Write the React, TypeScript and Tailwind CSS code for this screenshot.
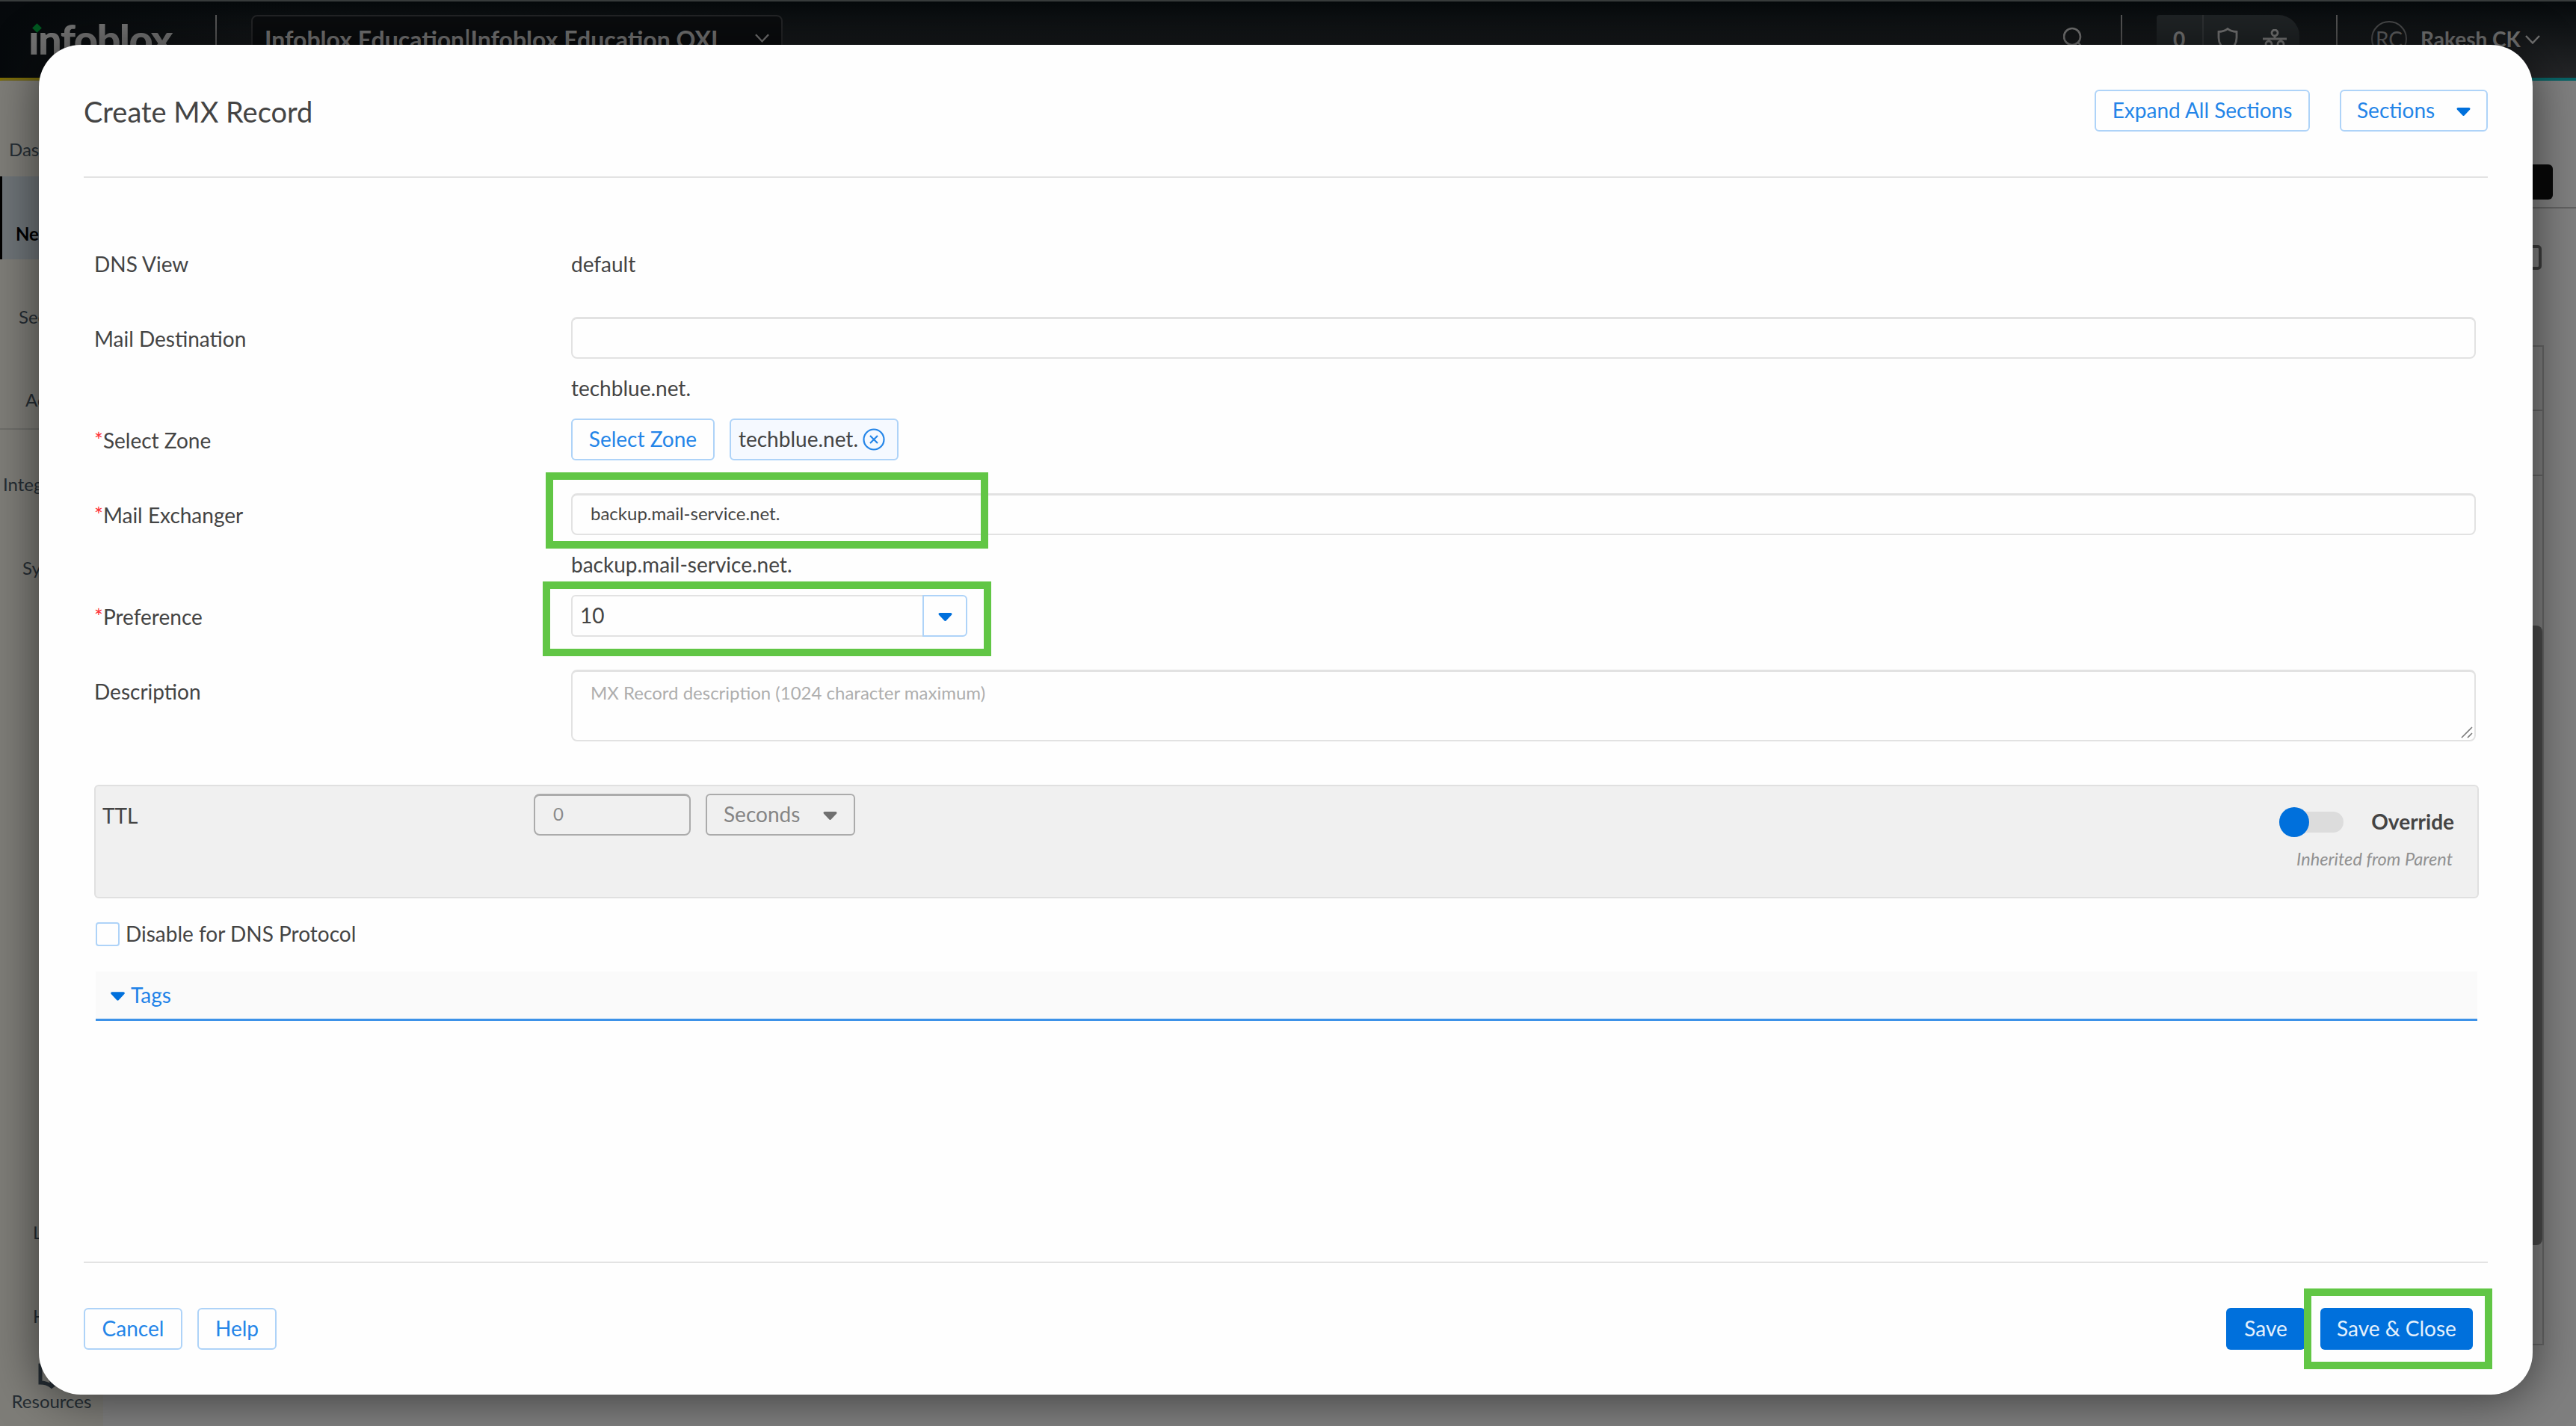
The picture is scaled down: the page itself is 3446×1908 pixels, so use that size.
import type { ReactNode } from 'react'

interface FieldRowProps {
  label: string
  required?: boolean
  className: string
  labelClassName?: string
  children: ReactNode
}

const navItems = [
  { label: 'Dashboard', className: 'h-[86px] pl-3 pt-[34px]' },
  {
    label: 'Network',
    className:
      'h-[111px] border-l-[3px] border-black bg-[#dce8f0] pl-[18px] pt-[61px] font-bold text-black',
  },
  { label: 'Security', className: 'h-[112px] pl-[25px] pt-[61px]' },
  {
    label: 'Admin',
    className: 'h-[116px] border-b-2 border-[#dddcd4] pl-[34px] pt-[60px]',
  },
  { label: 'Integrations', className: 'h-[108px] pl-[4px] pt-[57px]' },
  { label: 'System', className: 'h-[889px] pl-[30px] pt-[61px]' },
  { label: 'Launch', className: 'h-[112px] pl-[44px] pt-[61px]' },
  { label: 'Help', className: 'h-[111px] pl-[44px] pt-[61px]' },
]

function Caret({ className }: { className: string }) {
  return (
    <svg viewBox="0 0 20 12" className={className} fill="currentColor">
      <path d="M2 0h16c1.6 0 2.4 1.7 1.3 2.9l-7.8 8.3a2 2 0 0 1-3 0L.7 2.9C-.4 1.700.4 0 2 0z" />
    </svg>
  )
}

function Chevron({ className }: { className: string }) {
  return (
    <svg
      viewBox="0 0 20 12"
      className={className}
      fill="none"
      stroke="currentColor"
      strokeWidth="2.4"
    >
      <path d="M1 1l9 9.500 9-9.500" />
    </svg>
  )
}

function FieldRow({
  label,
  required,
  className,
  labelClassName = 'mt-[9px]',
  children,
}: FieldRowProps) {
  return (
    <div className={`flex items-start ${className}`}>
      <div className={`-ml-[2px] w-[638px] shrink-0 ${labelClassName}`}>
        {required && <span className="text-[#ff2f36]">*</span>}
        {label}
      </div>
      <div className="flex-1">{children}</div>
    </div>
  )
}

function TopBar() {
  return (
    <header className="flex h-[104px] items-start border-t-2 border-[#707878] bg-[linear-gradient(to_right,#0c1318,transparent_400px),linear-gradient(to_bottom,#0c1418,#4a4c50)] text-[#e4e4e4]">
      <div className="relative mt-[21px] ml-[38px] w-[250px] text-[56px] leading-[58px] font-black tracking-[-1.6px] text-[#e8e8e8]">
        ınfoblox
        <span className="absolute top-[10px] left-[7px] size-[9px] rotate-45 bg-[#00b140]" />
      </div>
      <div className="mt-[18px] h-14 w-[2px] bg-[#b0b0b0]" />
      <div className="mt-[18px] ml-[46px] flex h-16 w-[711px] items-start justify-between rounded-lg border-2 border-[#46494c] bg-[#14181c] pt-[11px] pr-4 pl-4 text-[32px] leading-10 font-bold">
        <span className="w-[630px] overflow-hidden whitespace-nowrap">
          Infoblox Education|Infoblox Education OXL
        </span>
        <Chevron className="mt-[12px] h-[12px] w-[19px]" />
      </div>
      <div className="flex-1" />
      <svg
        viewBox="0 0 28 34"
        className="mt-[34px] h-[34px] w-[28px]"
        fill="none"
        stroke="currentColor"
        strokeWidth="2.600"
      >
        <circle cx="12" cy="13" r="11" />
        <path d="M20 21l7 8" />
      </svg>
      <div className="mt-[18px] ml-[49px] h-14 w-[2px] bg-[#a8a8a8]" />
      <div className="mt-[18px] ml-[46px] flex h-16 w-[191px] items-start rounded-tr-[28px] rounded-tl bg-[#3f464b] text-[28px] leading-10 font-bold">
        <span className="w-[63px] border-r-2 border-[#5c6266] pt-[12px] pl-[22px]">
          0
        </span>
        <svg
          viewBox="0 0 28 34"
          className="mt-[17px] ml-[18px] h-[34px] w-[28px]"
          fill="none"
          stroke="currentColor"
          strokeWidth="2.800"
        >
          <path d="M14 1.500c3.500 3 7.500 3.800 12 4v8c0 8-3.500 13.500-12 18C5.500 27 2 21.500 2 13.500v-8c4.500-.2 8.500-1 12-4z" />
        </svg>
        <svg
          viewBox="0 0 32 32"
          className="mt-[19px] ml-[33px] size-8"
          fill="none"
          stroke="currentColor"
          strokeWidth="2.800"
        >
          <circle cx="16" cy="5" r="4" />
          <path d="M16 9v4M0 13h32M8 13v3M24 13v3" />
          <circle cx="8" cy="20" r="4" />
          <circle cx="24" cy="20" r="4" />
        </svg>
      </div>
      <div className="mt-[18px] ml-[49px] h-14 w-[2px] bg-[#a8a8a8]" />
      <div className="mt-[26px] ml-[45px] flex size-12 items-center justify-center rounded-full border-2 border-[#909294] text-[28px] text-[#b8babc]">
        RC
      </div>
      <span className="mt-[30px] ml-[18px] w-[136px] text-[28px] leading-10 font-bold whitespace-nowrap">
        Rakesh CK
      </span>
      <Chevron className="mt-[45px] mr-[48px] ml-[4px] h-[12px] w-[20px]" />
    </header>
  )
}

function PageBehind() {
  return (
    <div className="h-full">
      <TopBar />
      <div className="h-1 bg-linear-to-r from-[#ffdf00] via-[#58c043] to-[#10c8d0]" />
      <div className="flex h-[1800px]">
        <nav className="w-[138px] shrink-0 overflow-hidden bg-[#fcfaf0] pt-[42px] text-[24px] leading-8 text-[#4a5a68] shadow-[2px_0_4px_#bbb]">
          {navItems.map((item) => (
            <div key={item.label} className={item.className}>
              {item.label}
            </div>
          ))}
          <div className="flex flex-col items-center pt-[28px]">
            <svg
              viewBox="0 0 36 36"
              className="size-9"
              fill="none"
              stroke="currentColor"
              strokeWidth="5"
            >
              <path d="M18 9C13 5 8 4 3 4v23c5 0 10 1 15 5 5-4 10-5 15-5V4c-5 0-10 1-15 5zM18 9v23" />
            </svg>
            <span>Resources</span>
          </div>
        </nav>
        <main className="flex flex-1 flex-col items-end bg-white">
          <div className="flex h-[171px] w-full items-end justify-end border-b-2 border-[#c4c4c4] pr-[31px] pb-[10px]">
            <div className="h-[47px] w-[220px] rounded-[6px] bg-[#101010]" />
          </div>
          <div className="mt-[49px] mr-[46px] h-[33px] w-[60px] rounded-[5px] border-4 border-[#777]" />
          <div className="mt-[101px] mr-[43px] flex h-[1338px] w-[400px] flex-col items-end border-2 border-[#ccc]">
            <div className="h-[86px] w-full border-b-2 border-[#ccc]" />
            <div className="h-[87px] w-full border-b-2 border-[#ccc]" />
            <div className="mt-[200px] h-[829px] w-[20px] rounded-lg bg-[#949494]" />
          </div>
        </main>
      </div>
    </div>
  )
}

function RecordForm() {
  return (
    <div className="flex-1 pt-[95px] pr-[72px] pl-[74px]">
      <div className="pr-[4px] pl-[2px]">
        <FieldRow
          label="DNS View"
          className="h-[91px]"
          labelClassName="mt-0"
        >
          default
        </FieldRow>

        <FieldRow label="Mail Destination" className="h-[136px]">
          <div className="h-14 rounded-lg border-2 border-t-[3px] border-[#e2e2e2]" />
          <div className="mt-[19px]">techblue.net.</div>
        </FieldRow>

        <FieldRow label="Select Zone" required className="h-[100px]">
          <div className="flex gap-5">
            <button className="h-14 w-[192px] rounded-md border-2 border-[#aed3f8] pb-[2px] text-[#2485e8]">
              Select Zone
            </button>
            <div className="flex h-14 w-[226px] items-center rounded-md border-2 border-[#aed3f8] bg-[#f5f9ff] pl-[10px]">
              <span className="-mt-[2px]">techblue.net.</span>
              <svg
                viewBox="0 0 30 30"
                className="ml-[6px] size-[30px] text-[#2485e8]"
                fill="none"
                stroke="currentColor"
                strokeWidth="2.200"
              >
                <circle cx="15" cy="15" r="13.500" />
                <path d="M10 10l10 10M20 10l-10 10" />
              </svg>
            </div>
          </div>
        </FieldRow>

        <FieldRow label="Mail Exchanger" required className="h-[136px]">
          <div className="relative flex h-14 items-center rounded-lg border-2 border-t-[3px] border-[#e2e2e2] pb-[4px] pl-6 text-[24px]">
            backup.mail-service.net.
            <span className="absolute top-[-31px] left-[-36px] h-[102px] w-[592px] border-10 border-[#61c645]" />
          </div>
          <div className="mt-[19px]">backup.mail-service.net.</div>
        </FieldRow>

        <FieldRow label="Preference" required className="h-[100px]">
          <div className="relative flex w-[530px]">
            <div className="h-14 flex-1 rounded-l-md border-2 border-r-0 border-[#e2e2e2] pt-[5px] pl-[10px]">
              10
            </div>
            <button className="flex h-14 w-[60px] items-center justify-center rounded-r-md border-2 border-[#aed3f8] text-[#0070dc]">
              <Caret className="mt-[3px] h-[11px] w-[19px]" />
            </button>
            <span className="absolute top-[-18px] left-[-38px] h-[100px] w-[600px] border-10 border-[#61c645]" />
          </div>
        </FieldRow>

        <FieldRow label="Description" className="h-[154px]">
          <div className="relative h-[96px] rounded-lg border-2 border-t-[3px] border-[#e2e2e2] pt-[8px] pl-6 text-[24px] text-[#aeaeae]">
            MX Record description (1024 character maximum)
            <svg
              viewBox="0 0 16 16"
              className="absolute right-[2px] bottom-[2px] size-4"
              fill="none"
              stroke="#7c7c7c"
              strokeWidth="1.600"
            >
              <path d="M1 15L15 1M9 15l6-6" />
            </svg>
          </div>
        </FieldRow>
      </div>

      {/* TTL */}
      <div className="flex h-[152px] items-start rounded-md border-2 border-[#e0e0e0] bg-[#f0f0f0] pt-[10px] pl-[9px] pr-[31px]">
        <div className="mt-[9px] w-[577px]">TTL</div>
        <div className="flex h-14 w-[210px] items-center rounded-lg border-2 border-t-[3px] border-[#ababab] pb-[4px] pl-6 text-[24px] text-[#8a8a8a]">
          0
        </div>
        <button className="ml-5 flex h-14 w-[200px] items-center justify-between rounded-md border-2 border-[#ababab] pr-[22px] pl-[22px] text-[#858585]">
          <span className="-mt-[2px]">Seconds</span>
          <Caret className="mt-[2px] h-[11px] w-[19px] text-[#707070]" />
        </button>
        <div className="flex-1" />
        <div className="flex flex-col items-end">
          <div className="mt-[17px] flex h-[42px] items-center">
            <span className="flex h-7 w-[86px] items-center rounded-full bg-[#dcdcdc]">
              <span className="size-[40px] rounded-full bg-[#0070dc]" />
            </span>
            <span className="-mt-[2px] ml-[37px] font-bold">Override</span>
          </div>
          <div className="mt-[10px] pr-[2px] text-[23.6px] leading-9 text-[#919191] italic">
            Inherited from Parent
          </div>
        </div>
      </div>

      <div className="mt-[29px] ml-[2px] flex h-10 items-center gap-[8px]">
        <span className="-mt-[2px] size-8 rounded-[4px] border-2 border-[#aed3f8]" />
        <span className="-mt-[4px]">Disable for DNS Protocol</span>
      </div>

      {/* Tags */}
      <div className="mx-[2px] mt-[29px] flex h-[66px] items-center border-b-[3px] border-[#3d92e8] bg-[#fafafa] pl-[20px] text-[#1e82e8]">
        <Caret className="mt-[3px] mr-[8px] h-[12px] w-[19px] text-[#0070dc]" />
        <span className="-mt-[2px]">Tags</span>
      </div>
    </div>
  )
}

export default function App() {
  return (
    <div className="relative h-[1908px] w-[3446px] overflow-hidden bg-white font-['Lato',sans-serif] text-[28px] leading-10 text-[#444]">
      <PageBehind />

      <div className="absolute inset-0 bg-black/50 pt-[60px] pr-[58px] pl-[52px]">
        <div className="flex h-[1806px] flex-col rounded-[56px] bg-[#fefefe] shadow-[0_4px_64px_rgba(0,0,0,0.55)]">
          <div className="mx-[60px] flex h-[178px] items-start border-b-2 border-[#e3e3e3] pt-[60px]">
            <h1 className="mt-[4px] text-[38px] leading-[50px]">
              Create MX Record
            </h1>
            <div className="flex-1" />
            <button className="h-14 w-[288px] rounded-md border-2 border-[#aed3f8] pb-[2px] text-[#2485e8]">
              Expand All Sections
            </button>
            <button className="ml-10 flex h-14 w-[198px] items-center justify-between rounded-md border-2 border-[#aed3f8] pr-[21px] pl-[21px] text-[#2485e8]">
              <span className="-mt-[2px]">Sections</span>
              <Caret className="mt-[2px] h-[11px] w-[19px] text-[#0070dc]" />
            </button>
          </div>

          <RecordForm />

          <div className="mx-[60px] flex h-[178px] items-start border-t-2 border-[#e3e3e3] pt-[60px]">
            <button className="h-14 w-[132px] rounded-md border-2 border-[#aed3f8] pb-[2px] text-[#2485e8]">
              Cancel
            </button>
            <button className="ml-5 h-14 w-[106px] rounded-md border-2 border-[#aed3f8] pb-[2px] text-[#2485e8]">
              Help
            </button>
            <div className="flex-1" />
            <button className="h-14 w-[106px] rounded-md bg-[#0070dc] pb-[2px] text-[#e4f0fc]">
              Save
            </button>
            <div className="relative mr-5 ml-5">
              <button className="h-14 w-[204px] rounded-md bg-[#0070dc] pb-[2px] text-[#e4f0fc]">
                Save & Close
              </button>
              <span className="absolute top-[-26px] left-[-22px] h-[108px] w-[252px] border-10 border-[#61c645]" />
            </div>
          </div>
        </div>
      </div>
    </div>
  )
}
